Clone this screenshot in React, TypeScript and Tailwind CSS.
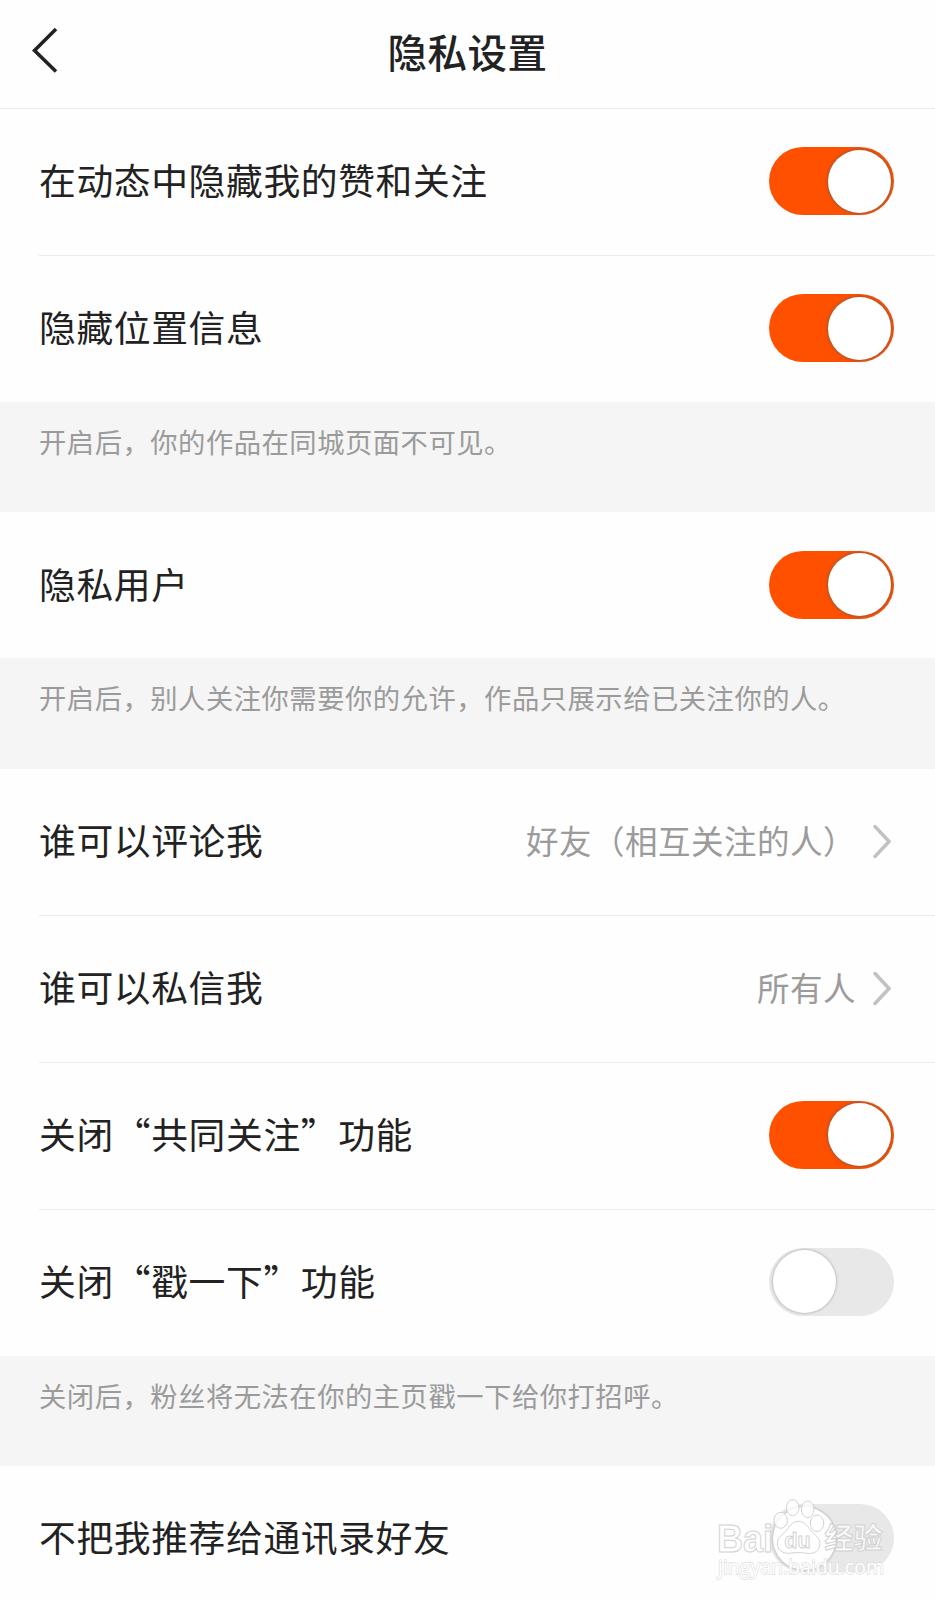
import { useState } from 'react';

interface SettingItem {
  label: string;
  enabled?: boolean;
  value?: string;
}

interface SettingGroup {
  items: SettingItem[];
  note?: string;
}

const groups: SettingGroup[] = [
  {
    items: [
      { label: '在动态中隐藏我的赞和关注', enabled: true },
      { label: '隐藏位置信息', enabled: true },
    ],
    note: '开启后，你的作品在同城页面不可见。',
  },
  {
    items: [{ label: '隐私用户', enabled: true }],
    note: '开启后，别人关注你需要你的允许，作品只展示给已关注你的人。',
  },
  {
    items: [
      { label: '谁可以评论我', value: '好友（相互关注的人）' },
      { label: '谁可以私信我', value: '所有人' },
      { label: '关闭“共同关注”功能', enabled: true },
      { label: '关闭“戳一下”功能', enabled: false },
    ],
    note: '关闭后，粉丝将无法在你的主页戳一下给你打招呼。',
  },
  {
    items: [{ label: '不把我推荐给通讯录好友', enabled: false }],
  },
];

function Toggle({ label, defaultOn }: { label: string; defaultOn: boolean }) {
  const [on, setOn] = useState(defaultOn);

  return (
    <button
      type="button"
      role="switch"
      aria-checked={on}
      aria-label={label}
      onClick={() => setOn(!on)}
      className={`flex h-[68px] w-[125px] shrink-0 items-center rounded-full px-[3.5px] ${
        on ? 'justify-end bg-[#ff5000]' : 'justify-start bg-[#e8e8e8]'
      }`}
    >
      <span
        className={`size-[63px] rounded-full bg-white ${
          on ? 'shadow-[0_0_3px_1px_rgba(90,90,90,0.55)]' : 'shadow-[0_0_2px_1px_rgba(0,0,0,0.17)]'
        }`}
      />
    </button>
  );
}

function SettingRow({ item, last }: { item: SettingItem; last: boolean }) {
  return (
    <div className={`ml-[39px] flex items-center justify-between pb-[1.5px] pr-[41px] ${last ? 'h-[146px]' : 'h-[147px] border-b border-[#ebebeb]'}`}>
      <span className="pb-[3px] text-[36.8px] leading-none tracking-[0.6px] text-[#222]">{item.label}</span>
      {item.value ? (
        <span className="flex items-center gap-[17px] text-[32.5px] leading-none tracking-[0.5px] text-[#9b9b9b]">
          <span className="pb-[2px]">{item.value}</span>
          <svg className="mr-[3px] h-9 w-[18px]" viewBox="0 0 18 36" fill="none" stroke="#c2c2c2" strokeWidth={3.5} strokeLinecap="round">
            <path d="M2 3.5 16 18.500 2 33.500" />
          </svg>
        </span>
      ) : (
        <Toggle label={item.label} defaultOn={!!item.enabled} />
      )}
    </div>
  );
}

function Watermark() {
  return (
    <svg className="pointer-events-none absolute bottom-0 right-0 h-[150px] w-[245px]" viewBox="0 0 245 150">
      <g fill="#fff" fillOpacity={0.8} stroke="#d2d2d2" strokeWidth={1} fontWeight={700}>
        <text x={27} y={101.5} fontSize={39} textLength={56} lengthAdjust="spacingAndGlyphs" className="font-['Liberation_Sans',sans-serif]">Bai</text>
        <ellipse cx={102.7} cy={57.7} rx={6.3} ry={8} />
        <ellipse cx={117.7} cy={59.3} rx={6.3} ry={8.3} />
        <ellipse cx={90.7} cy={70.3} rx={6.7} ry={8} />
        <ellipse cx={127} cy={73.3} rx={6.7} ry={8.3} />
        <path d="M108.5 71.2c-5 0-8.2 3.8-11.3 8.3-3.6 5-9.8 7.2-9.8 13.8 0 6.2 4.6 10 10.1 10 4.2 0 6.7-.8 11-.8s6.8 1 11 1c5.6 0 10.4-3.5 10.4-9.9 0-6.5-5.8-8.7-9.7-13.9-3.4-4.6-6.5-8.5-11.7-8.5z" />
        <text x={94.5} y={97.5} fontSize={22} textLength={26} lengthAdjust="spacingAndGlyphs" className="font-['Liberation_Sans',sans-serif]">du</text>
        <text x={134.5} y={99} fontSize={29} textLength={58} lengthAdjust="spacingAndGlyphs">经验</text>
      </g>
      <text x={28} y={123.8} fontSize={20.5} textLength={166} lengthAdjust="spacingAndGlyphs" fill="#fff" stroke="#dedede" strokeWidth={1.4} paintOrder="stroke" className="font-['Open_Sans',sans-serif]">
        jingyan.baidu.com
      </text>
    </svg>
  );
}

export default function App() {
  return (
    <div className="relative h-[1600px] w-[935px] overflow-hidden bg-[#fefefe] font-['Noto_Sans_CJK_SC',sans-serif]">
      {/* Header */}
      <header className="grid h-[109px] grid-cols-[1fr_auto_1fr] items-center border-b border-[#ebebeb] px-8">
        <button type="button" aria-label="返回" className="-mt-2">
          <svg className="h-[46px] w-7" viewBox="0 0 28 46" fill="none" stroke="#222" strokeWidth={3.6}>
            <path d="M24 2 2.5 23.5 24 44.5" />
          </svg>
        </button>
        <h1 className="pb-1.5 text-[39.5px] font-medium leading-none tracking-[0.5px] text-[#222]">隐私设置</h1>
      </header>

      {/* Settings */}
      <main>
        {groups.map((group, index) => (
          <section key={index}>
            {group.items.map((item, i) => (
              <SettingRow key={item.label} item={item} last={i === group.items.length - 1} />
            ))}
            {group.note && (
              <p className="h-[110.25px] bg-[#f5f5f5] pl-[39px] pt-[25px] text-[27.3px] leading-[28px] tracking-[0.52px] text-[#9b9b9b]">
                {group.note}
              </p>
            )}
          </section>
        ))}
      </main>

      <Watermark />
    </div>
  );
}
